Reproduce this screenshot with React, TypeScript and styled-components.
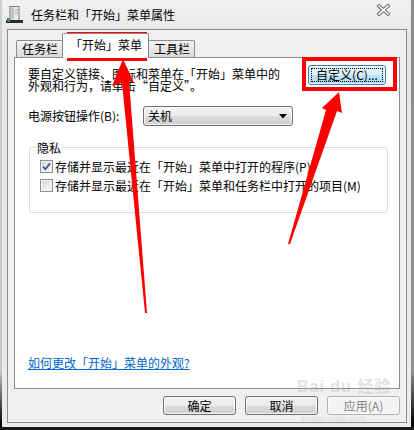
import React from "react";
import styled, { createGlobalStyle } from "styled-components";

const GlobalStyle = createGlobalStyle`
  html, body {
    margin: 0;
    padding: 0;
    background: #fff;
  }
  body {
    font-family: "Noto Sans CJK SC", "Liberation Sans", sans-serif;
    font-size: 12px;
    color: #000;
  }
`;

const Window = styled.div`
  position: relative;
  width: 414px;
  height: 430px;
  box-sizing: border-box;
  padding-bottom: 7px;
  display: flex;
  flex-direction: column;
  overflow: hidden;
  background:
    linear-gradient(#d0d0d0 0, #c8c8c8 370px, #000 425px) left top / 2px 100% no-repeat,
    linear-gradient(#8a8a8a 0, #909090 370px, #000 425px) right top / 3px 100% no-repeat,
    linear-gradient(#f1f1f1, #e7e7e7 40px, #ebebeb);
  box-shadow: inset 0 -3px 0 #161616;
`;

const TitleBar = styled.div`
  height: 29px;
  flex-shrink: 0;
  display: flex;
  align-items: center;
  padding-left: 6px;
`;

const Title = styled.span`
  margin-left: 8px;
  font-size: 12px;
  line-height: 14px;
  color: #000;
`;

const CloseGlyph = styled.svg`
  margin-left: auto;
  margin-right: 24px;
  margin-top: -10px;
`;

const Client = styled.div`
  flex: 1;
  margin: 0 7px;
  border: 1px solid #8c8c8c;
  background: #f0f0f0;
  display: flex;
  flex-direction: column;
  padding: 3px 6px 7px;
  min-height: 0;
`;

const TabStrip = styled.div`
  display: flex;
  align-items: flex-end;
  height: 25px;
  margin-bottom: -1px;
  padding-left: 2px;
  position: relative;
  z-index: 1;
`;

const Tab = styled.div<{ $active?: boolean; $first?: boolean }>`
  box-sizing: border-box;
  height: ${(p) => (p.$active ? "25px" : "17px")};
  margin-bottom: ${(p) => (p.$active ? "0" : "1px")};
  margin-left: ${(p) => (p.$first ? "0" : "-1px")};
  padding: ${(p) => (p.$active ? "3px 6px 0 7px" : "0 4px 0 5px")};
  border: 1px solid #898c95;
  border-bottom: none;
  border-radius: 2px 2px 0 0;
  background: ${(p) =>
    p.$active ? "#fff" : "linear-gradient(#f3f3f3, #e6e6e6 50%, #dadada)"};
  position: relative;
  z-index: ${(p) => (p.$active ? 2 : 1)};
  line-height: 15px;
  white-space: nowrap;
`;

const Panel = styled.div`
  flex: 1;
  border: 1px solid #898c95;
  background: #fff;
  display: flex;
  flex-direction: column;
  padding: 7px 13px 18px 13px;
  min-height: 0;
`;

const DescRow = styled.div`
  display: flex;
  justify-content: space-between;
  align-items: flex-start;
`;

const DescText = styled.p`
  margin: 3px 0 0;
  width: 256px;
  line-height: 12px;
`;

const WinButton = styled.button<{ $focused?: boolean }>`
  position: relative;
  box-sizing: border-box;
  height: ${(p) => (p.$focused ? "20px" : "19px")};
  width: ${(p) => (p.$focused ? "78px" : "73px")};
  padding: 0;
  font-family: inherit;
  font-size: 12px;
  line-height: 14px;
  color: #000;
  border: 1px solid ${(p) => (p.$focused ? "#3c7fb1" : "#707070")};
  border-radius: 3px;
  background: ${(p) =>
    p.$focused
      ? "linear-gradient(#eaf6fd 0%, #d9f0fc 50%, #bee6fd 50%, #a7d9f5 100%)"
      : "linear-gradient(#f2f2f2 0%, #ebebeb 50%, #dddddd 50%, #cfcfcf 100%)"};
  box-shadow: inset 0 0 0 1px rgba(255, 255, 255, 0.75);

  &:disabled {
    border-color: #adb2b5;
    background: #f4f4f4;
    color: #838383;
  }

  ${(p) =>
    p.$focused &&
    `
    &::after {
      content: "";
      position: absolute;
      inset: 2px;
      border: 1px dotted #000;
      border-radius: 1px;
    }
  `}
`;

const PowerRow = styled.div`
  display: flex;
  align-items: center;
  margin-top: 14px;
`;

const PowerLabel = styled.span`
  width: 115px;
  line-height: 14px;
`;

const Combo = styled.div`
  box-sizing: border-box;
  width: 150px;
  height: 20px;
  display: flex;
  align-items: center;
  justify-content: space-between;
  padding: 0 5px 0 4px;
  border: 1px solid #707070;
  border-radius: 3px;
  background: linear-gradient(#f2f2f2 0%, #ebebeb 50%, #dddddd 50%, #cfcfcf 100%);
  box-shadow: inset 0 0 0 1px rgba(255, 255, 255, 0.7);
  line-height: 14px;
`;

const Group = styled.fieldset`
  margin: 15px -2px 0 1px;
  padding: 3px 4px 17px 6px;
  border: 1px solid #d5dfe5;
  border-radius: 3px;
  min-width: 0;
`;

const GroupLegend = styled.legend`
  padding: 0 1px;
  line-height: 13px;
`;

const CheckRow = styled.label`
  display: flex;
  align-items: center;
  gap: 2px;
  height: 19px;
  padding-left: 4px;
  line-height: 14px;
  white-space: nowrap;
`;

const CheckBox = styled.span`
  box-sizing: border-box;
  width: 13px;
  height: 13px;
  flex-shrink: 0;
  display: flex;
  align-items: center;
  justify-content: center;
  border: 1px solid #8e8f8f;
  background: linear-gradient(135deg, #cfd2d6, #eeeeee 60%, #f8f8f8);
  box-shadow: inset 0 0 0 1px #f4f4f4;
`;

const HelpLink = styled.a`
  margin-top: auto;
  color: #0066cc;
  text-decoration: underline;
  line-height: 14px;
  align-self: flex-start;
`;

const ButtonRow = styled.div`
  display: flex;
  justify-content: flex-end;
  gap: 9px;
  margin-top: 7px;
  height: 19px;
  flex-shrink: 0;
`;

const Watermark = styled.div`
  position: absolute;
  left: 297px;
  top: 379px;
  color: rgba(170, 170, 170, 0.35);
  font-family: "Liberation Sans", "Noto Sans CJK SC", sans-serif;
  pointer-events: none;
  line-height: 1;
`;

const WatermarkBrand = styled.div`
  font-size: 16px;
  font-weight: bold;
  letter-spacing: 1px;
`;

const WatermarkSite = styled.div`
  font-size: 8px;
  margin-top: 20px;
  padding-left: 4px;
`;

const Annotations = styled.svg`
  position: absolute;
  left: 0;
  top: 0;
  pointer-events: none;
`;

const Check = ({ checked }: { checked?: boolean }) => (
  <CheckBox>
    {checked && (
      <svg width="9" height="9" viewBox="0 0 9 9">
        <path d="M1 4.6 L3.4 7.2 L8 1.4" fill="none" stroke="#3d5590" strokeWidth="1.7" />
      </svg>
    )}
  </CheckBox>
);

const App = () => {
  return (
    <>
      <GlobalStyle />
      <Window>
        <TitleBar>
          <svg width="17" height="17" viewBox="0 0 17 17">
            <rect x="4" y="0.5" width="9" height="14" fill="#e9e9e9" stroke="#7d7d7d" />
            <rect x="5" y="1.5" width="3" height="12" fill="#c4c4c4" />
            <line x1="9" y1="4" x2="12" y2="4" stroke="#9a9a9a" />
            <line x1="9" y1="7" x2="12" y2="7" stroke="#9a9a9a" />
            <rect x="0" y="14" width="17" height="3" fill="#2a2a2a" />
            <rect x="1" y="12" width="3" height="3" fill="#4a8a3a" />
            <rect x="1" y="15" width="3" height="1" fill="#3a6fb0" />
          </svg>
          <Title>任务栏和「开始」菜单属性</Title>
          <CloseGlyph width="13" height="12" viewBox="0 0 13 12">
            <path d="M2 2 L11 10 M11 2 L2 10" stroke="#6e6e6e" strokeWidth="3.6" strokeLinecap="square" />
            <path d="M2 2 L11 10 M11 2 L2 10" stroke="#fff" strokeWidth="1.6" strokeLinecap="square" />
          </CloseGlyph>
        </TitleBar>

        <Client>
          <TabStrip>
            <Tab $first>任务栏</Tab>
            <Tab $active>「开始」菜单</Tab>
            <Tab>工具栏</Tab>
          </TabStrip>

          <Panel>
            <DescRow>
              <DescText>
                要自定义链接、图标和菜单在「开始」菜单中的外观和行为，请单击“自定义”。
              </DescText>
              <WinButton $focused>自定义(C)...</WinButton>
            </DescRow>

            <PowerRow>
              <PowerLabel>电源按钮操作(B):</PowerLabel>
              <Combo>
                <span>关机</span>
                <svg width="8" height="5" viewBox="0 0 8 5">
                  <path d="M0 0 H8 L4 4.5 Z" fill="#000" />
                </svg>
              </Combo>
            </PowerRow>

            <Group>
              <GroupLegend>隐私</GroupLegend>
              <CheckRow>
                <Check checked />
                <span>存储并显示最近在「开始」菜单中打开的程序(P)</span>
              </CheckRow>
              <CheckRow>
                <Check />
                <span>存储并显示最近在「开始」菜单和任务栏中打开的项目(M)</span>
              </CheckRow>
            </Group>

            <HelpLink href="#">如何更改「开始」菜单的外观?</HelpLink>
          </Panel>

          <ButtonRow>
            <WinButton>确定</WinButton>
            <WinButton>取消</WinButton>
            <WinButton disabled>应用(A)</WinButton>
          </ButtonRow>
        </Client>

        <Watermark>
          <WatermarkBrand>Bai du 经验</WatermarkBrand>
          <WatermarkSite>jingyan.baidu.com</WatermarkSite>
        </Watermark>

        <Annotations width="414" height="430" viewBox="0 0 414 430">
          <rect x="69" y="34" width="76" height="25" fill="none" stroke="#ff0000" strokeWidth="4" />
          <rect x="304" y="59" width="91" height="30" fill="none" stroke="#ff0000" strokeWidth="4" />
          <polygon points="123,59 134,83 129,81 147,313 145,313 122,83 112,86" fill="#ff0000" />
          <polygon points="339,92 342,113 337,111 290,244 288,244 326,110 322,108" fill="#ff0000" />
        </Annotations>
      </Window>
    </>
  );
};

export default App;
